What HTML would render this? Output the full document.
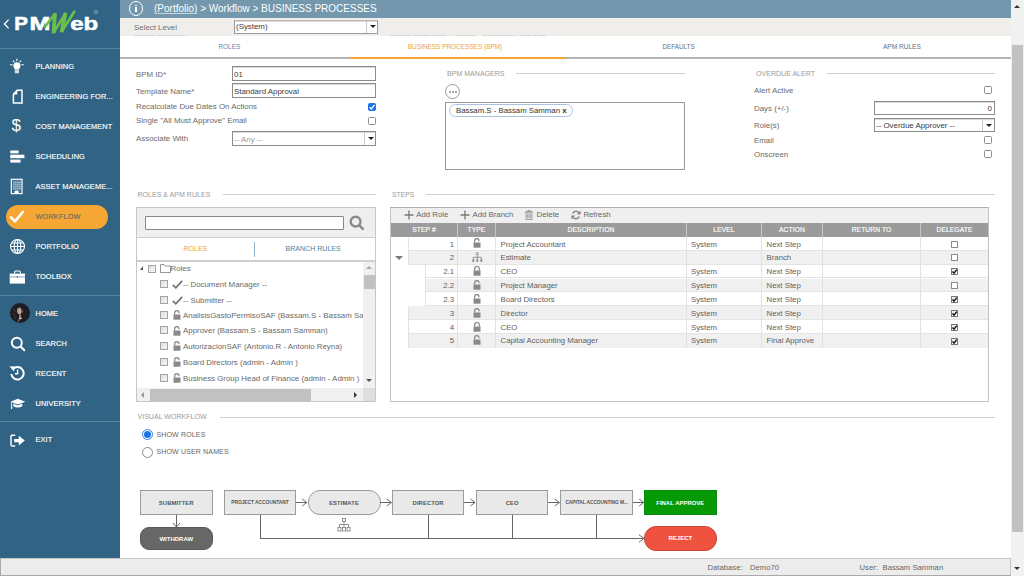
<!DOCTYPE html>
<html><head><meta charset="utf-8">
<style>
*{box-sizing:border-box;margin:0;padding:0}
html,body{width:1024px;height:576px;overflow:hidden;background:#fff;font-family:"Liberation Sans",sans-serif;position:relative}
.a{position:absolute;white-space:nowrap}
#side{position:absolute;left:0;top:0;width:120px;height:558px;background:#306384}
.nav{position:absolute;left:35.5px;color:#fff;font-size:7.4px;letter-spacing:0.1px;-webkit-text-stroke:0.15px currentColor;height:12px;line-height:12px}
.ico{position:absolute}
.sep{position:absolute;left:0;width:120px;height:1px;background:#5784a2}
.lbl{position:absolute;color:#6a6a6a;font-size:7.9px;height:12px;line-height:12px;white-space:nowrap}
.inp{position:absolute;border:1px solid #8c8c8c;box-shadow:inset 0 1px 0 #d9d9d9;background:#fff;font-size:7.9px;color:#3a3a3a;padding-left:1px;white-space:nowrap}
.cb{position:absolute;width:8px;height:8px;border:1px solid #8e8e8e;border-radius:1.5px;background:#fff}
.sect{position:absolute;color:#9a9a9a;font-size:7.05px;letter-spacing:0;height:10px;line-height:10px;white-space:nowrap}
.hl{position:absolute;height:1px;background:#cfcfcf}
</style></head><body>
<div id="side">
  <!-- logo -->
  <svg class="ico" width="110" height="40" viewBox="0 0 110 40" style="left:0;top:0">
    <path d="M8.6 19.6L4.4 24L8.6 28.4" fill="none" stroke="#fff" stroke-width="1.3"/>
    <text x="14.2" y="29.6" font-family="Liberation Sans" font-weight="bold" font-size="19" fill="#fff" transform="translate(14.2 0) scale(1.08 1) translate(-14.2 0)" stroke="#fff" stroke-width="0.6">P</text>
    <text x="29.5" y="29.6" font-family="Liberation Sans" font-weight="bold" font-size="19" fill="#fff" transform="translate(29.5 0) scale(1.32 1) translate(-29.5 0)" stroke="#fff" stroke-width="0.6">M</text>
    <text x="70.2" y="29.6" font-family="Liberation Sans" font-weight="bold" font-size="19" fill="#fff" transform="translate(70.2 0) scale(1.27 1) translate(-70.2 0)" stroke="#fff" stroke-width="0.5">eb</text>
    <path d="M44.5 27.5L55 13.5L53.5 33L65.5 13L61.5 32L74.8 10.8" fill="none" stroke="#6cc04a" stroke-width="2.6" stroke-linejoin="bevel"/>
    <path d="M55 13.5L53.5 33M65.5 13L61.5 32" fill="none" stroke="#6cc04a" stroke-width="3.8"/>
    <circle cx="95.9" cy="12.2" r="1.6" fill="none" stroke="#9fb6c6" stroke-width="0.8"/>
  </svg>
  <div class="sep" style="top:48px"></div>
  <div class="a" style="left:6px;top:205px;width:102px;height:24px;border-radius:12px;background:#f6a733"></div>
  <!-- sidebar icons -->
  <svg class="ico" width="16" height="16" viewBox="0 0 16 16" style="left:8.7px;top:58px"><g stroke="#fff" stroke-width="1.1" fill="none" stroke-linecap="round"><path d="M7.9 1V2.6M4.2 2.9L5.2 4M11.8 2.9L10.8 4M1.4 6.8H3.2M12.6 6.7H14.4"/></g><path d="M7.9 4.2A3.55 3.55 0 0 0 4.35 7.75C4.35 9.4 5.4 10.2 5.7 11.4H10.1C10.4 10.2 11.45 9.4 11.45 7.75A3.55 3.55 0 0 0 7.9 4.2Z" fill="#fff"/><path d="M5.8 11.6H10V15.3H5.8Z" fill="#dfe6ec"/><path d="M5.8 12.9H10M5.8 14.2H10" stroke="#9fb4c4" stroke-width="0.4"/></svg>
  <svg class="ico" width="12" height="16" viewBox="0 0 12 16" style="left:11.5px;top:89px"><path d="M5.1 1.25H10V14H1.4V5.4Z" fill="none" stroke="#fff" stroke-width="1.5"/><path d="M1.4 5.6H5.3V1.4Z" fill="#fff"/></svg>
  <div class="a" style="left:11.5px;top:117px;color:#fff;font-size:17px;line-height:18px;font-family:'Liberation Sans',sans-serif">$</div>
  <svg class="ico" width="16" height="14" viewBox="0 0 16 14" style="left:10px;top:150px"><g fill="#fff"><rect x="0.3" y="0.5" width="8.3" height="2.9"/><rect x="0.3" y="4.7" width="14.1" height="3.5"/><rect x="0.3" y="9.6" width="10.2" height="3"/></g></svg>
  <svg class="ico" width="14" height="17" viewBox="0 0 14 17" style="left:10px;top:178px"><rect x="1.3" y="1.3" width="10.7" height="14.3" fill="none" stroke="#fff" stroke-width="1.2"/><g stroke="#fff" fill="none"><path d="M3.9 2.5V12.5M5.9 2.5V12.5M7.9 2.5V12.5M9.9 2.5V12.5" stroke-width="0.7" opacity="0.85"/><path d="M2.5 4.5H11M2.5 6.5H11M2.5 8.5H11M2.5 10.5H11" stroke-width="0.4" opacity="0.6"/></g><path d="M4.5 15.6V13.6A2.2 1.3 0 0 1 8.8 13.6V15.6Z" fill="#fff"/></svg>
  <svg class="ico" width="16" height="14" viewBox="0 0 16 14" style="left:9px;top:209.5px"><path d="M2 7.3L6 11.3L13.8 2" fill="none" stroke="#fff" stroke-width="2.6" stroke-linecap="round" stroke-linejoin="round"/></svg>
  <svg class="ico" width="17" height="17" viewBox="0 0 17 17" style="left:9px;top:238px"><g fill="none" stroke="#fff" stroke-width="1.1"><circle cx="8.5" cy="8.5" r="7"/><ellipse cx="8.5" cy="8.5" rx="3.3" ry="7"/><path d="M8.5 1.5V15.5M1.5 8.5H15.5M2.5 5H14.5M2.5 12H14.5"/></g></svg>
  <svg class="ico" width="17" height="15" viewBox="0 0 17 15" style="left:9px;top:269.5px"><path d="M5.6 3.6V2.2Q5.6 1 6.8 1H10.2Q11.4 1 11.4 2.2V3.6" fill="none" stroke="#fff" stroke-width="1.1"/><rect x="0.7" y="3.6" width="15.3" height="10" fill="#fff"/><path d="M0.7 6.9H16" stroke="#306384" stroke-width="0.6"/><rect x="7.7" y="6.3" width="1.3" height="1.2" fill="#306384"/></svg>
  <svg class="ico" width="20" height="20" viewBox="0 0 20 20" style="left:10px;top:303px"><circle cx="10" cy="10" r="10" fill="#1d1c20"/><path d="M3 6L6 9M2.5 10L6 13M4 14L6 16" stroke="#3a3536" stroke-width="1.2"/><ellipse cx="9.2" cy="7.8" rx="2.3" ry="3.2" fill="#8f8a88"/><ellipse cx="9.6" cy="8.6" rx="1.7" ry="3" fill="#c8a58e"/><path d="M9 11.5L10.8 11.5L11.3 14.5L9.4 14.5Z" fill="#b08a72"/><path d="M9.2 14.2L12.2 14.8L11 16.5L8.8 16Z" fill="#b9c0c6"/><path d="M8.2 16L9.5 16.5L9 19L7.8 18.5Z" fill="#6e6e70"/><path d="M12 6.5L13.5 7.5L13 10.5L12 10Z" fill="#4a4749"/></svg>
  <svg class="ico" width="16" height="16" viewBox="0 0 16 16" style="left:9.5px;top:335.5px"><circle cx="6.8" cy="6.7" r="5" fill="none" stroke="#fff" stroke-width="1.9"/><path d="M10.6 10.5L14.3 14.3" stroke="#fff" stroke-width="2" stroke-linecap="round"/></svg>
  <svg class="ico" width="16" height="16" viewBox="0 0 16 16" style="left:9px;top:365px"><path d="M3.8 4.2A6.2 6.2 0 1 1 2.3 9" fill="none" stroke="#fff" stroke-width="2"/><path d="M0.5 1.2L5.8 1.4L4.9 6.6Z" fill="#fff"/><path d="M8.6 4.6V8.7H6" fill="none" stroke="#fff" stroke-width="1.4"/></svg>
  <svg class="ico" width="16" height="12" viewBox="0 0 16 12" style="left:9.5px;top:397.5px"><path d="M7.8 0.8L15.3 3.8L7.8 6.6L0.5 3.8Z" fill="#fff"/><path d="M3.3 5.6V8.2Q7.8 10.6 12.3 8.2V5.6L7.8 7.4Z" fill="#fff"/><path d="M1.6 4.2V9.5" stroke="#fff" stroke-width="0.9"/><rect x="1" y="9" width="1.2" height="2" fill="#fff"/></svg>
  <svg class="ico" width="16" height="14" viewBox="0 0 16 14" style="left:9.5px;top:433.5px"><path d="M5.2 1.2H2.2Q1 1.2 1 2.4V10.8Q1 12 2.2 12H5.2" fill="none" stroke="#fff" stroke-width="1.4"/><path d="M4.2 5H8.8V1.8L14.8 6.6L8.8 11.4V8.2H4.2Z" fill="#fff"/></svg>

  <div class="nav" style="top:61px">PLANNING</div>
  <div class="nav" style="top:91px">ENGINEERING FOR...</div>
  <div class="nav" style="top:121px">COST MANAGEMENT</div>
  <div class="nav" style="top:151px">SCHEDULING</div>
  <div class="nav" style="top:181px">ASSET MANAGEME...</div>
  <div class="nav" style="top:211px;color:#6b6b6b">WORKFLOW</div>
  <div class="nav" style="top:241px">PORTFOLIO</div>
  <div class="nav" style="top:271px">TOOLBOX</div>
  <div class="sep" style="top:295px"></div>
  <div class="nav" style="top:308px">HOME</div>
  <div class="nav" style="top:338px">SEARCH</div>
  <div class="nav" style="top:368px">RECENT</div>
  <div class="nav" style="top:398px">UNIVERSITY</div>
  <div class="sep" style="top:421px"></div>
  <div class="nav" style="top:434px">EXIT</div>
</div>

<!-- header -->
<div class="a" style="left:120px;top:0;width:891px;height:18px;background:#7397ac"></div>
<div class="a" style="left:128.8px;top:1.4px;width:14.4px;height:14.4px;border:1.8px solid #fff;border-radius:50%"></div><div class="a" style="left:135.2px;top:4.6px;width:1.9px;height:1.9px;background:#fff;border-radius:0.5px"></div><div class="a" style="left:135.2px;top:7.4px;width:1.9px;height:5px;background:#fff"></div>
<div class="a" style="left:154px;top:3px;color:#fff;font-size:10px;line-height:12px"><span style="text-decoration:underline;text-decoration-color:rgba(255,255,255,0.6);text-underline-offset:1px">(Portfolio)</span> &gt; Workflow &gt; BUSINESS PROCESSES</div>
<div class="a" style="left:120px;top:18px;width:891px;height:18px;background:#efeeea"></div>
<div class="lbl" style="left:134px;top:22.3px;color:#737373">Select Level</div>
<div class="inp" style="left:234px;top:19.5px;width:144px;height:14px;line-height:12.0px;padding-top:0.6px;border-color:#999;border-top:1.5px solid #b9b9b9">(System)</div><div class="a" style="left:366px;top:20.5px;width:1px;height:12.5px;background:#c9c9c9"></div><div class="a" style="left:370px;top:25.2px;width:0;height:0;border-left:3px solid transparent;border-right:3px solid transparent;border-top:3px solid #222"></div>

<!-- tabs -->
<div class="a" style="left:120px;top:57px;width:891px;height:2px;background:#b5b5b5"></div>
<div class="a" style="left:349px;top:57px;width:217px;height:2px;background:#f5a733"></div>


<!-- hidden row peeking -->
<div class="a" style="left:120px;top:34.5px;width:891px;height:1.5px;overflow:hidden;opacity:0.4">
  <div class="a" style="left:14px;top:-5px;color:#888;font-size:7.8px;line-height:8px">Select Location</div>
  <div class="a" style="left:270px;top:-5px;color:#888;font-size:7.8px;line-height:8px">Select Business Process &nbsp; Standard Approval</div>
</div>
<div class="a" style="left:120px;top:36px;width:891px;height:21px;background:#fff"></div>
<div class="a" style="left:218.4px;top:41px;color:#5b8bb0;font-size:6.45px;line-height:12px">ROLES</div>
<div class="a" style="left:407.8px;top:41px;color:#f0a23f;font-size:6.45px;line-height:12px">BUSINESS PROCESSES (BPM)</div>
<div class="a" style="left:662.5px;top:41px;color:#5c7488;font-size:6.32px;line-height:12px">DEFAULTS</div>
<div class="a" style="left:883px;top:41px;color:#5c7488;font-size:6.55px;line-height:12px">APM RULES</div>

<!-- form left -->
<div class="lbl" style="left:136px;top:68.8px">BPM ID*</div>
<div class="inp" style="left:232px;top:66px;width:144px;height:15px;line-height:13.0px;padding-top:0.6px">01</div>
<div class="lbl" style="left:136px;top:85.8px">Template Name*</div>
<div class="inp" style="left:232px;top:83px;width:144px;height:15px;line-height:13.0px;padding-top:0.6px">Standard Approval</div>
<div class="lbl" style="left:136px;top:100.8px">Recalculate Due Dates On Actions</div>
<div class="cb" style="left:368px;top:103px;border-color:#1a73e8;background:#1a73e8"></div><svg class="ico" width="8" height="8" viewBox="0 0 8 8" style="left:368px;top:103px"><path d="M1.6 4.2L3.3 5.9L6.5 1.8" fill="none" stroke="#fff" stroke-width="1.3"/></svg>
<div class="lbl" style="left:136px;top:114.8px">Single "All Must Approve" Email</div>
<div class="cb" style="left:368px;top:117px"></div>
<div class="lbl" style="left:136px;top:132.8px">Associate With</div>
<div class="inp" style="left:232px;top:131px;width:144px;height:15px;line-height:13.0px;padding-top:0.6px;color:#999">-- Any --</div><div class="a" style="left:364px;top:132px;width:1px;height:13px;background:#c9c9c9"></div><div class="a" style="left:368px;top:137.0px;width:0;height:0;border-left:3px solid transparent;border-right:3px solid transparent;border-top:3px solid #222"></div>

<!-- BPM managers -->
<div class="sect" style="left:447px;top:69px">BPM MANAGERS</div>
<div class="hl" style="left:516px;top:73px;width:169px"></div>
<div class="a" style="left:445px;top:84px;width:15px;height:15px;border:1px solid #999;border-radius:50%"></div><div class="a" style="left:448.5px;top:90.5px;width:2px;height:2px;border-radius:50%;background:#8a8a8a;box-shadow:3px 0 0 #8a8a8a,6px 0 0 #8a8a8a"></div>
<div class="a" style="left:445px;top:102px;width:240px;height:68px;border:1px solid #979797"></div>
<div class="a" style="left:449px;top:104px;width:124px;height:13px;border:1px solid #a9c4de;border-radius:7px"></div>
<div class="a" style="left:456px;top:104.5px;color:#333;font-size:7.8px;line-height:12px">Bassam.S - Bassam Samman <b>x</b></div>

<!-- overdue alert -->
<div class="sect" style="left:756px;top:69px">OVERDUE ALERT</div>
<div class="hl" style="left:827px;top:73px;width:168px"></div>
<div class="lbl" style="left:754px;top:84.8px">Alert Active</div>
<div class="cb" style="left:984px;top:86px"></div>
<div class="lbl" style="left:754px;top:102.8px">Days (+/-)</div>
<div class="inp" style="left:874px;top:101px;width:121px;height:14px;line-height:12.0px;padding-top:0.6px;text-align:right;padding-right:2px">0</div>
<div class="lbl" style="left:754px;top:119.8px">Role(s)</div>
<div class="inp" style="left:874px;top:118px;width:121px;height:14px;line-height:12.0px;padding-top:0.6px">-- Overdue Approver --</div><div class="a" style="left:982px;top:119px;width:1px;height:12px;background:#c9c9c9"></div><div class="a" style="left:986px;top:123.5px;width:0;height:0;border-left:3px solid transparent;border-right:3px solid transparent;border-top:3px solid #222"></div>
<div class="lbl" style="left:754px;top:134.8px">Email</div>
<div class="cb" style="left:984px;top:136px"></div>
<div class="lbl" style="left:754px;top:148.8px">Onscreen</div>
<div class="cb" style="left:984px;top:150px"></div>


<!-- roles & apm -->
<div class="sect" style="left:137.5px;top:189.5px">ROLES &amp; APM RULES</div>
<div class="hl" style="left:223px;top:194px;width:153px"></div>
<div class="a" style="left:136px;top:207px;width:240px;height:195px;border:1px solid #c6c6c6;background:#fff"></div>
<div class="a" style="left:137px;top:208px;width:238px;height:30px;background:#efefef;border-bottom:1px solid #d0d0d0"></div>
<div class="a" style="left:144.5px;top:215.5px;width:199px;height:14px;border:1px solid #888;background:#fff;border-radius:1px"></div>
<svg class="ico" width="16" height="16" viewBox="0 0 16 16" style="left:348.5px;top:214.5px"><circle cx="6.6" cy="6.6" r="4.9" fill="none" stroke="#8a8a8a" stroke-width="2.4"/><path d="M10.3 10.3L13.8 13.8" stroke="#8a8a8a" stroke-width="2.6" stroke-linecap="round"/></svg>
<div class="a" style="left:183.5px;top:243px;color:#f0a23f;font-size:7px;line-height:12px">ROLES</div>
<div class="a" style="left:254px;top:242px;width:1px;height:15px;background:#8fb2d1"></div>
<div class="a" style="left:285.5px;top:243px;color:#4f7fa5;font-size:7.05px;line-height:12px">BRANCH RULES</div>
<div class="a" style="left:137px;top:260px;width:238px;height:2px;background:#cfcfcf"></div>
<!-- tree -->
<div class="a" style="left:139.5px;top:266px;width:0;height:0;border-left:3px solid transparent;border-bottom:4px solid #555;transform:rotate(0deg)"></div>
<div class="cb" style="left:148px;top:265px;border-color:#a3a3a3;border-radius:0;background:linear-gradient(135deg,#dedede,#f8f8f8)"></div>
<svg class="ico" width="11" height="9" viewBox="0 0 11 9" style="left:159.5px;top:264px"><path d="M0.5 8.5V0.5H4L5 2H10.5V8.5Z" fill="none" stroke="#8a8a8a" stroke-width="0.9"/></svg>
<div class="lbl" style="left:170.5px;top:263.0px;color:#6a6a6a">Roles</div>
<div class="cb" style="left:160px;top:279.9px;border-color:#a3a3a3;border-radius:0;background:linear-gradient(135deg,#dedede,#f8f8f8)"></div>
<svg class="ico" width="11" height="9" viewBox="0 0 11 9" style="left:172px;top:280px"><path d="M0.8 4.8L3.8 7.8L10.2 0.8" fill="none" stroke="#777" stroke-width="1.8"/></svg>
<div class="lbl" style="left:183px;top:278.6px;color:#6a6a6a">-- Document Manager --</div>
<div class="cb" style="left:160px;top:296.0px;border-color:#a3a3a3;border-radius:0;background:linear-gradient(135deg,#dedede,#f8f8f8)"></div>
<svg class="ico" width="11" height="9" viewBox="0 0 11 9" style="left:172px;top:296px"><path d="M0.8 4.8L3.8 7.8L10.2 0.8" fill="none" stroke="#777" stroke-width="1.8"/></svg>
<div class="lbl" style="left:183px;top:294.7px;color:#6a6a6a">-- Submitter --</div>
<div class="cb" style="left:160px;top:311.2px;border-color:#a3a3a3;border-radius:0;background:linear-gradient(135deg,#dedede,#f8f8f8)"></div>
<svg class="ico" width="8" height="10" viewBox="0 0 8 10" style="left:173px;top:310px"><path d="M1.6 4.5V2.8a2.2 2.2 0 0 1 4.4 0V3.2" fill="none" stroke="#8a8a8a" stroke-width="1.3"/><rect x="0.5" y="4.5" width="7" height="5.2" fill="#8a8a8a"/></svg>
<div class="lbl" style="left:183px;top:309.9px;color:#6a6a6a;width:180px;overflow:hidden">AnalisisGastoPermisoSAF (Bassam.S - Bassam Samman)</div>
<div class="cb" style="left:160px;top:326.4px;border-color:#a3a3a3;border-radius:0;background:linear-gradient(135deg,#dedede,#f8f8f8)"></div>
<svg class="ico" width="8" height="10" viewBox="0 0 8 10" style="left:173px;top:326px"><path d="M1.6 4.5V2.8a2.2 2.2 0 0 1 4.4 0V3.2" fill="none" stroke="#8a8a8a" stroke-width="1.3"/><rect x="0.5" y="4.5" width="7" height="5.2" fill="#8a8a8a"/></svg>
<div class="lbl" style="left:183px;top:325.1px;color:#6a6a6a">Approver (Bassam.S - Bassam Samman)</div>
<div class="cb" style="left:160px;top:342.2px;border-color:#a3a3a3;border-radius:0;background:linear-gradient(135deg,#dedede,#f8f8f8)"></div>
<svg class="ico" width="8" height="10" viewBox="0 0 8 10" style="left:173px;top:341px"><path d="M1.6 4.5V2.8a2.2 2.2 0 0 1 4.4 0V3.2" fill="none" stroke="#8a8a8a" stroke-width="1.3"/><rect x="0.5" y="4.5" width="7" height="5.2" fill="#8a8a8a"/></svg>
<div class="lbl" style="left:183px;top:340.9px;color:#6a6a6a">AutorizacionSAF (Antonio.R - Antonio Reyna)</div>
<div class="cb" style="left:160px;top:358.2px;border-color:#a3a3a3;border-radius:0;background:linear-gradient(135deg,#dedede,#f8f8f8)"></div>
<svg class="ico" width="8" height="10" viewBox="0 0 8 10" style="left:173px;top:357px"><path d="M1.6 4.5V2.8a2.2 2.2 0 0 1 4.4 0V3.2" fill="none" stroke="#8a8a8a" stroke-width="1.3"/><rect x="0.5" y="4.5" width="7" height="5.2" fill="#8a8a8a"/></svg>
<div class="lbl" style="left:183px;top:356.9px;color:#6a6a6a">Board Directors (admin - Admin )</div>
<div class="cb" style="left:160px;top:373.9px;border-color:#a3a3a3;border-radius:0;background:linear-gradient(135deg,#dedede,#f8f8f8)"></div>
<svg class="ico" width="8" height="10" viewBox="0 0 8 10" style="left:173px;top:373px"><path d="M1.6 4.5V2.8a2.2 2.2 0 0 1 4.4 0V3.2" fill="none" stroke="#8a8a8a" stroke-width="1.3"/><rect x="0.5" y="4.5" width="7" height="5.2" fill="#8a8a8a"/></svg>
<div class="lbl" style="left:183px;top:372.6px;color:#6a6a6a">Business Group Head of Finance (admin - Admin )</div>
<div class="a" style="left:363px;top:262px;width:12px;height:126px;background:#f0f0f0"></div>
<div class="a" style="left:366px;top:266px;width:0;height:0;border-left:3px solid transparent;border-right:3px solid transparent;border-bottom:3px solid #a8a8a8"></div>
<div class="a" style="left:363.5px;top:275px;width:11px;height:14px;background:#c1c1c1"></div>
<div class="a" style="left:366px;top:379px;width:0;height:0;border-left:3px solid transparent;border-right:3px solid transparent;border-top:3px solid #555"></div>
<div class="a" style="left:137px;top:388px;width:238px;height:13px;background:#f0f0f0"></div>
<div class="a" style="left:141px;top:391.5px;width:0;height:0;border-top:3px solid transparent;border-bottom:3px solid transparent;border-right:3px solid #999"></div>
<div class="a" style="left:150px;top:388.5px;width:161px;height:12px;background:#c1c1c1"></div>
<div class="a" style="left:354px;top:391.5px;width:0;height:0;border-top:3px solid transparent;border-bottom:3px solid transparent;border-left:3px solid #333"></div>
<div class="a" style="left:363px;top:388px;width:12px;height:13px;background:#dedede"></div>


<!-- steps -->
<div class="sect" style="left:392px;top:189.5px;font-size:6.75px">STEPS</div>
<div class="hl" style="left:425.5px;top:194px;width:569px"></div>
<div class="a" style="left:390px;top:207px;width:599px;height:195px;border:1px solid #c4c4c4;border-top-color:#b0b0b0;background:#fff"></div>
<div class="a" style="left:391px;top:208px;width:597px;height:15px;background:#efefef"></div>
<svg class="ico" width="10" height="10" viewBox="0 0 10 10" style="left:404px;top:209.5px"><path d="M5 0.5V9.5M0.5 5H9.5" stroke="#777" stroke-width="1.3"/></svg>
<div class="a" style="left:416.3px;top:209px;color:#666;font-size:7.8px;line-height:12px">Add Role</div>
<svg class="ico" width="10" height="10" viewBox="0 0 10 10" style="left:459.5px;top:209.5px"><path d="M5 0.5V9.5M0.5 5H9.5" stroke="#777" stroke-width="1.3"/></svg>
<div class="a" style="left:472.5px;top:209px;color:#666;font-size:7.8px;line-height:12px">Add Branch</div>
<svg class="ico" width="8" height="10" viewBox="0 0 8 10" style="left:525px;top:209.5px"><g fill="none" stroke="#999" stroke-width="0.9"><path d="M0.3 1.6H7.7M2.8 1.6V0.5H5.2V1.6"/><rect x="1" y="2.3" width="6" height="7.2"/><path d="M2.6 3.5V8.3M4 3.5V8.3M5.4 3.5V8.3"/></g></svg>
<div class="a" style="left:536.6px;top:209px;color:#666;font-size:7.8px;line-height:12px">Delete</div>
<svg class="ico" width="10" height="10" viewBox="0 0 10 10" style="left:571px;top:209.5px"><g fill="none" stroke="#888" stroke-width="1.4"><path d="M8.3 3.6A3.6 3.6 0 0 0 1.6 3.4"/><path d="M1.7 6.4A3.6 3.6 0 0 0 8.4 6.6"/></g><path d="M9.6 0.6V4.4H5.8Z M0.4 9.4V5.6H4.2Z" fill="#888"/></svg>
<div class="a" style="left:583.4px;top:209px;color:#666;font-size:7.8px;line-height:12px">Refresh</div>
<div class="a" style="left:391px;top:223px;width:597px;height:14px;background:#9b9b9b"></div>
<div class="a" style="left:391px;top:223px;width:66px;height:14px;text-align:center;color:#fff;font-size:6.7px;letter-spacing:0.1px;line-height:14px;-webkit-text-stroke:0.15px #fff">STEP #</div>
<div class="a" style="left:457px;top:223px;width:38px;height:14px;text-align:center;color:#fff;font-size:6.7px;letter-spacing:0.1px;line-height:14px;border-left:1px solid #c6c6c6;-webkit-text-stroke:0.15px #fff">TYPE</div>
<div class="a" style="left:495px;top:223px;width:191px;height:14px;text-align:center;color:#fff;font-size:6.7px;letter-spacing:0.1px;line-height:14px;border-left:1px solid #c6c6c6;-webkit-text-stroke:0.15px #fff">DESCRIPTION</div>
<div class="a" style="left:686px;top:223px;width:75px;height:14px;text-align:center;color:#fff;font-size:6.7px;letter-spacing:0.1px;line-height:14px;border-left:1px solid #c6c6c6;-webkit-text-stroke:0.15px #fff">LEVEL</div>
<div class="a" style="left:761px;top:223px;width:61px;height:14px;text-align:center;color:#fff;font-size:6.7px;letter-spacing:0.1px;line-height:14px;border-left:1px solid #c6c6c6;-webkit-text-stroke:0.15px #fff">ACTION</div>
<div class="a" style="left:822px;top:223px;width:98px;height:14px;text-align:center;color:#fff;font-size:6.7px;letter-spacing:0.1px;line-height:14px;border-left:1px solid #c6c6c6;-webkit-text-stroke:0.15px #fff">RETURN TO</div>
<div class="a" style="left:920px;top:223px;width:68px;height:14px;text-align:center;color:#fff;font-size:6.7px;letter-spacing:0.1px;line-height:14px;border-left:1px solid #c6c6c6;-webkit-text-stroke:0.15px #fff">DELEGATE</div>
<div class="a" style="left:408px;top:237px;width:580px;height:13.8px;background:#fff;border-bottom:1px solid #e4e4e4"></div>
<div class="a" style="left:408px;top:238.50px;width:46px;text-align:right;color:#5e5e5e;font-size:7.8px;line-height:12px">1</div>
<svg class="ico" width="8" height="10" viewBox="0 0 8 10" style="left:472.5px;top:238px"><path d="M1.6 4.5V2.8a2.2 2.2 0 0 1 4.4 0V3.2" fill="none" stroke="#8a8a8a" stroke-width="1.3"/><rect x="0.5" y="4.5" width="7" height="5.2" fill="#8a8a8a"/></svg>
<div class="a" style="left:500.5px;top:238.50px;color:#5e5e5e;font-size:7.8px;line-height:12px">Project Accountant</div>
<div class="a" style="left:691px;top:238.50px;color:#5e5e5e;font-size:7.8px;line-height:12px">System</div>
<div class="a" style="left:766.5px;top:238.50px;color:#5e5e5e;font-size:7.8px;line-height:12px">Next Step</div>
<div class="cb" style="left:951px;top:241px;width:7px;height:7px;border-color:#8a8a8a;border-radius:0.5px"></div>
<div class="a" style="left:408px;top:250.8px;width:580px;height:13.8px;background:#f0f0f0;border-bottom:1px solid #e4e4e4"></div>
<div class="a" style="left:408px;top:252.30px;width:46px;text-align:right;color:#5e5e5e;font-size:7.8px;line-height:12px">2</div>
<svg class="ico" width="11" height="10" viewBox="0 0 11 10" style="left:471.5px;top:252px"><g fill="none" stroke="#8a8a8a" stroke-width="0.9"><circle cx="5.3" cy="1.6" r="1.1"/><path d="M5.3 2.7V5.3M1.3 8V5.3H9.3V8M5.3 5.3V8"/></g><g fill="#8a8a8a"><rect x="0.3" y="7.6" width="2" height="2.2"/><rect x="4.3" y="7.6" width="2" height="2.2"/><rect x="8.3" y="7.6" width="2" height="2.2"/></g></svg>
<div class="a" style="left:500.5px;top:252.30px;color:#5e5e5e;font-size:7.8px;line-height:12px">Estimate</div>
<div class="a" style="left:766.5px;top:252.30px;color:#5e5e5e;font-size:7.8px;line-height:12px">Branch</div>
<div class="cb" style="left:951px;top:254px;width:7px;height:7px;border-color:#8a8a8a;border-radius:0.5px"></div>
<div class="a" style="left:425px;top:264.6px;width:563px;height:13.9px;background:#fff;border-bottom:1px solid #e4e4e4"></div>
<div class="a" style="left:425px;top:266.15px;width:29px;text-align:right;color:#5e5e5e;font-size:7.8px;line-height:12px">2.1</div>
<svg class="ico" width="8" height="10" viewBox="0 0 8 10" style="left:472.5px;top:266px"><path d="M1.6 4.5V2.8a2.4 2.4 0 0 1 4.8 0V4.5" fill="none" stroke="#8a8a8a" stroke-width="1.3"/><rect x="0.5" y="4.5" width="7" height="5.2" fill="#8a8a8a"/></svg>
<div class="a" style="left:500.5px;top:266.15px;color:#5e5e5e;font-size:7.8px;line-height:12px">CEO</div>
<div class="a" style="left:691px;top:266.15px;color:#5e5e5e;font-size:7.8px;line-height:12px">System</div>
<div class="a" style="left:766.5px;top:266.15px;color:#5e5e5e;font-size:7.8px;line-height:12px">Next Step</div>
<div class="cb" style="left:951px;top:268px;width:7px;height:7px;border-color:#777;border-radius:0.5px;background:linear-gradient(#e8e8e8,#fff)"></div><svg class="ico" width="7" height="7" viewBox="0 0 7 7" style="left:951px;top:268px"><path d="M1.5 3.5L3 5.1L5.8 1.6" fill="none" stroke="#111" stroke-width="1.4"/></svg>
<div class="a" style="left:425px;top:278.5px;width:563px;height:13.9px;background:#f0f0f0;border-bottom:1px solid #e4e4e4"></div>
<div class="a" style="left:425px;top:280.05px;width:29px;text-align:right;color:#5e5e5e;font-size:7.8px;line-height:12px">2.2</div>
<svg class="ico" width="8" height="10" viewBox="0 0 8 10" style="left:472.5px;top:280px"><path d="M1.6 4.5V2.8a2.2 2.2 0 0 1 4.4 0V3.2" fill="none" stroke="#8a8a8a" stroke-width="1.3"/><rect x="0.5" y="4.5" width="7" height="5.2" fill="#8a8a8a"/></svg>
<div class="a" style="left:500.5px;top:280.05px;color:#5e5e5e;font-size:7.8px;line-height:12px">Project Manager</div>
<div class="a" style="left:691px;top:280.05px;color:#5e5e5e;font-size:7.8px;line-height:12px">System</div>
<div class="a" style="left:766.5px;top:280.05px;color:#5e5e5e;font-size:7.8px;line-height:12px">Next Step</div>
<div class="cb" style="left:951px;top:282px;width:7px;height:7px;border-color:#8a8a8a;border-radius:0.5px"></div>
<div class="a" style="left:425px;top:292.4px;width:563px;height:13.8px;background:#fff;border-bottom:1px solid #e4e4e4"></div>
<div class="a" style="left:425px;top:293.90px;width:29px;text-align:right;color:#5e5e5e;font-size:7.8px;line-height:12px">2.3</div>
<svg class="ico" width="8" height="10" viewBox="0 0 8 10" style="left:472.5px;top:294px"><path d="M1.6 4.5V2.8a2.2 2.2 0 0 1 4.4 0V3.2" fill="none" stroke="#8a8a8a" stroke-width="1.3"/><rect x="0.5" y="4.5" width="7" height="5.2" fill="#8a8a8a"/></svg>
<div class="a" style="left:500.5px;top:293.90px;color:#5e5e5e;font-size:7.8px;line-height:12px">Board Directors</div>
<div class="a" style="left:691px;top:293.90px;color:#5e5e5e;font-size:7.8px;line-height:12px">System</div>
<div class="a" style="left:766.5px;top:293.90px;color:#5e5e5e;font-size:7.8px;line-height:12px">Next Step</div>
<div class="cb" style="left:951px;top:296px;width:7px;height:7px;border-color:#777;border-radius:0.5px;background:linear-gradient(#e8e8e8,#fff)"></div><svg class="ico" width="7" height="7" viewBox="0 0 7 7" style="left:951px;top:296px"><path d="M1.5 3.5L3 5.1L5.8 1.6" fill="none" stroke="#111" stroke-width="1.4"/></svg>
<div class="a" style="left:408px;top:306.2px;width:580px;height:13.9px;background:#f0f0f0;border-bottom:1px solid #e4e4e4"></div>
<div class="a" style="left:408px;top:307.75px;width:46px;text-align:right;color:#5e5e5e;font-size:7.8px;line-height:12px">3</div>
<svg class="ico" width="8" height="10" viewBox="0 0 8 10" style="left:472.5px;top:308px"><path d="M1.6 4.5V2.8a2.2 2.2 0 0 1 4.4 0V3.2" fill="none" stroke="#8a8a8a" stroke-width="1.3"/><rect x="0.5" y="4.5" width="7" height="5.2" fill="#8a8a8a"/></svg>
<div class="a" style="left:500.5px;top:307.75px;color:#5e5e5e;font-size:7.8px;line-height:12px">Director</div>
<div class="a" style="left:691px;top:307.75px;color:#5e5e5e;font-size:7.8px;line-height:12px">System</div>
<div class="a" style="left:766.5px;top:307.75px;color:#5e5e5e;font-size:7.8px;line-height:12px">Next Step</div>
<div class="cb" style="left:951px;top:310px;width:7px;height:7px;border-color:#777;border-radius:0.5px;background:linear-gradient(#e8e8e8,#fff)"></div><svg class="ico" width="7" height="7" viewBox="0 0 7 7" style="left:951px;top:310px"><path d="M1.5 3.5L3 5.1L5.8 1.6" fill="none" stroke="#111" stroke-width="1.4"/></svg>
<div class="a" style="left:408px;top:320.1px;width:580px;height:13.9px;background:#fff;border-bottom:1px solid #e4e4e4"></div>
<div class="a" style="left:408px;top:321.65px;width:46px;text-align:right;color:#5e5e5e;font-size:7.8px;line-height:12px">4</div>
<svg class="ico" width="8" height="10" viewBox="0 0 8 10" style="left:472.5px;top:322px"><path d="M1.6 4.5V2.8a2.4 2.4 0 0 1 4.8 0V4.5" fill="none" stroke="#8a8a8a" stroke-width="1.3"/><rect x="0.5" y="4.5" width="7" height="5.2" fill="#8a8a8a"/></svg>
<div class="a" style="left:500.5px;top:321.65px;color:#5e5e5e;font-size:7.8px;line-height:12px">CEO</div>
<div class="a" style="left:691px;top:321.65px;color:#5e5e5e;font-size:7.8px;line-height:12px">System</div>
<div class="a" style="left:766.5px;top:321.65px;color:#5e5e5e;font-size:7.8px;line-height:12px">Next Step</div>
<div class="cb" style="left:951px;top:324px;width:7px;height:7px;border-color:#777;border-radius:0.5px;background:linear-gradient(#e8e8e8,#fff)"></div><svg class="ico" width="7" height="7" viewBox="0 0 7 7" style="left:951px;top:324px"><path d="M1.5 3.5L3 5.1L5.8 1.6" fill="none" stroke="#111" stroke-width="1.4"/></svg>
<div class="a" style="left:408px;top:334px;width:580px;height:13.6px;background:#f0f0f0"></div>
<div class="a" style="left:408px;top:335.40px;width:46px;text-align:right;color:#5e5e5e;font-size:7.8px;line-height:12px">5</div>
<svg class="ico" width="8" height="10" viewBox="0 0 8 10" style="left:472.5px;top:335px"><path d="M1.6 4.5V2.8a2.2 2.2 0 0 1 4.4 0V3.2" fill="none" stroke="#8a8a8a" stroke-width="1.3"/><rect x="0.5" y="4.5" width="7" height="5.2" fill="#8a8a8a"/></svg>
<div class="a" style="left:500.5px;top:335.40px;color:#5e5e5e;font-size:7.8px;line-height:12px">Capital Accounting Manager</div>
<div class="a" style="left:691px;top:335.40px;color:#5e5e5e;font-size:7.8px;line-height:12px">System</div>
<div class="a" style="left:766.5px;top:335.40px;color:#5e5e5e;font-size:7.8px;line-height:12px">Final Approve</div>
<div class="cb" style="left:951px;top:338px;width:7px;height:7px;border-color:#777;border-radius:0.5px;background:linear-gradient(#e8e8e8,#fff)"></div><svg class="ico" width="7" height="7" viewBox="0 0 7 7" style="left:951px;top:338px"><path d="M1.5 3.5L3 5.1L5.8 1.6" fill="none" stroke="#111" stroke-width="1.4"/></svg>
<div class="a" style="left:457px;top:237px;width:1px;height:110.6px;background:#e2e2e2"></div>
<div class="a" style="left:495px;top:237px;width:1px;height:110.6px;background:#e2e2e2"></div>
<div class="a" style="left:686px;top:237px;width:1px;height:110.6px;background:#e2e2e2"></div>
<div class="a" style="left:761px;top:237px;width:1px;height:110.6px;background:#e2e2e2"></div>
<div class="a" style="left:822px;top:237px;width:1px;height:110.6px;background:#e2e2e2"></div>
<div class="a" style="left:920px;top:237px;width:1px;height:110.6px;background:#e2e2e2"></div>
<div class="a" style="left:408px;top:237px;width:1px;height:27.6px;background:#e2e2e2"></div><div class="a" style="left:408px;top:306.2px;width:1px;height:41.4px;background:#e2e2e2"></div>
<div class="a" style="left:425px;top:264.6px;width:1px;height:41.6px;background:#e2e2e2"></div>
<div class="a" style="left:395px;top:256px;width:0;height:0;border-left:4.7px solid transparent;border-right:4.7px solid transparent;border-top:4.7px solid #7a7a7a"></div>

<!-- visual workflow -->
<div class="sect" style="left:137.5px;top:412px">VISUAL WORKFLOW</div>
<div class="hl" style="left:220px;top:417px;width:775px"></div>
<div class="a" style="left:142px;top:429px;width:11px;height:11px;border:1px solid #3b82e0;border-radius:50%;background:#fff"></div>
<div class="a" style="left:144px;top:431px;width:7px;height:7px;border-radius:50%;background:#1a73e8"></div>
<div class="a" style="left:156.5px;top:428.5px;color:#666;font-size:7px;letter-spacing:0.15px;line-height:12px">SHOW ROLES</div>
<div class="a" style="left:142px;top:446.5px;width:11px;height:11px;border:1px solid #8a8a8a;border-radius:50%;background:#fff"></div>
<div class="a" style="left:156.5px;top:446px;color:#666;font-size:7px;letter-spacing:0.15px;line-height:12px">SHOW USER NAMES</div>
<div class="a" style="left:140px;top:490.3px;width:72.5px;height:24.4px;background:#e9e9e9;border:1px solid #9a9a9a;text-align:center;color:#555;font-weight:bold;font-size:5.9px;letter-spacing:0.05px;line-height:24.4px">SUBMITTER</div>
<div class="a" style="left:223.75px;top:490.3px;width:72.5px;height:24.4px;background:#e9e9e9;border:1px solid #9a9a9a;text-align:center;color:#555;font-weight:bold;font-size:4.9px;letter-spacing:-0.05px;line-height:24.4px">PROJECT ACCOUNTANT</div>
<div class="a" style="left:307.5px;top:490.3px;width:73px;height:24.4px;background:#e9e9e9;border:1px solid #9a9a9a;border-radius:12px;text-align:center;color:#555;font-weight:bold;font-size:5.9px;letter-spacing:0.05px;line-height:24.4px">ESTIMATE</div>
<div class="a" style="left:391.9px;top:490.3px;width:72.5px;height:24.4px;background:#e9e9e9;border:1px solid #9a9a9a;text-align:center;color:#555;font-weight:bold;font-size:5.9px;letter-spacing:0.05px;line-height:24.4px">DIRECTOR</div>
<div class="a" style="left:475.9px;top:490.3px;width:72.5px;height:24.4px;background:#e9e9e9;border:1px solid #9a9a9a;text-align:center;color:#555;font-weight:bold;font-size:5.9px;letter-spacing:0.05px;line-height:24.4px">CEO</div>
<div class="a" style="left:560.3px;top:490.3px;width:72.5px;height:24.4px;background:#e9e9e9;border:1px solid #9a9a9a;text-align:center;color:#555;font-weight:bold;font-size:4.9px;letter-spacing:-0.1px;line-height:24.4px">CAPITAL ACCOUNTING M...</div>
<div class="a" style="left:644px;top:490.3px;width:72.6px;height:24.4px;background:#069a06;border:1px solid #0a8a0a;text-align:center;color:#fff;font-weight:bold;font-size:5.9px;letter-spacing:0.05px;line-height:24.4px">FINAL APPROVE</div>
<div class="a" style="left:140px;top:527px;width:72.5px;height:23.3px;background:#676767;border:1px solid #5a5a5a;border-radius:9px;text-align:center;color:#fff;font-weight:bold;font-size:6px;line-height:22.3px">WITHDRAW</div>
<div class="a" style="left:644px;top:526.3px;width:72.6px;height:24.3px;background:#ef5340;border:1px solid #c9453a;border-radius:12px;text-align:center;color:#fff;font-weight:bold;font-size:6px;line-height:23.3px">REJECT</div>
<svg class="ico" width="12.2" height="9" viewBox="0 0 12.2 9" style="left:296.25px;top:498px"><path d="M0 4.5H10.8M6.2 1L10.8 4.5L6.2 8" fill="none" stroke="#666" stroke-width="1"/></svg>
<svg class="ico" width="12.9" height="9" viewBox="0 0 12.9 9" style="left:380.0px;top:498px"><path d="M0 4.5H11.4M6.9 1L11.4 4.5L6.9 8" fill="none" stroke="#666" stroke-width="1"/></svg>
<svg class="ico" width="12.5" height="9" viewBox="0 0 12.5 9" style="left:464.4px;top:498px"><path d="M0 4.5H11.0M6.5 1L11.0 4.5L6.5 8" fill="none" stroke="#666" stroke-width="1"/></svg>
<svg class="ico" width="12.9" height="9" viewBox="0 0 12.9 9" style="left:548.4px;top:498px"><path d="M0 4.5H11.4M6.9 1L11.4 4.5L6.9 8" fill="none" stroke="#666" stroke-width="1"/></svg>
<svg class="ico" width="12.2" height="9" viewBox="0 0 12.2 9" style="left:632.8px;top:498px"><path d="M0 4.5H10.7M6.2 1L10.7 4.5L6.2 8" fill="none" stroke="#666" stroke-width="1"/></svg>
<svg class="ico" width="9" height="13" viewBox="0 0 9 13" style="left:171.75px;top:514.5px"><path d="M4.5 0V12M1 8L4.5 12L8 8" fill="none" stroke="#666" stroke-width="1"/></svg>
<div class="a" style="left:259.5px;top:514.5px;width:1px;height:24px;background:#666"></div>
<div class="a" style="left:259.5px;top:537.5px;width:385px;height:1px;background:#666"></div>
<div class="a" style="left:427.6px;top:514.5px;width:1px;height:23.5px;background:#666"></div>
<div class="a" style="left:511.6px;top:514.5px;width:1px;height:23.5px;background:#666"></div>
<div class="a" style="left:596px;top:514.5px;width:1px;height:23.5px;background:#666"></div>
<svg class="ico" width="7" height="9" viewBox="0 0 7 9" style="left:637.5px;top:533.5px"><path d="M1 0.8L6 4.5L1 8.2" fill="none" stroke="#666" stroke-width="1"/></svg>
<svg class="ico" width="14" height="14" viewBox="0 0 14 14" style="left:337px;top:518px"><g fill="none" stroke="#888" stroke-width="0.9"><rect x="5.5" y="0.5" width="3" height="3"/><path d="M7 3.5V6.5M2.5 9V6.5H11.5V9M7 6.5V9"/><rect x="1" y="9.5" width="3" height="3.5"/><rect x="5.5" y="9.5" width="3" height="3.5"/><rect x="10" y="9.5" width="3" height="3.5"/></g></svg>
<!-- status bar -->
<div class="a" style="left:0;top:558px;width:1011px;height:18px;background:#ececec;border:1px solid #c4c4c4;border-left-color:#aaa;border-bottom-color:#aaa"></div>
<div class="a" style="left:707.5px;top:562px;color:#666;font-size:7.7px;line-height:12px">Database:</div>
<div class="a" style="left:750px;top:562px;color:#666;font-size:7.7px;line-height:12px">Demo70</div>
<div class="a" style="left:859.5px;top:562px;color:#666;font-size:7.7px;line-height:12px">User:</div>
<div class="a" style="left:882.5px;top:562px;color:#666;font-size:7.7px;line-height:12px">Bassam Samman</div>

<!-- scrollbar -->
<div class="a" style="left:1011px;top:0;width:13px;height:576px;background:#f1f1f1"></div>
<div class="a" style="left:1012px;top:45px;width:11px;height:487px;background:#c1c1c1"></div>
<div class="a" style="left:1014px;top:5px;width:0;height:0;border-left:3.5px solid transparent;border-right:3.5px solid transparent;border-bottom:3.5px solid #333"></div>
<div class="a" style="left:1014px;top:567px;width:0;height:0;border-left:3.5px solid transparent;border-right:3.5px solid transparent;border-top:3.5px solid #333"></div>
</body></html>
